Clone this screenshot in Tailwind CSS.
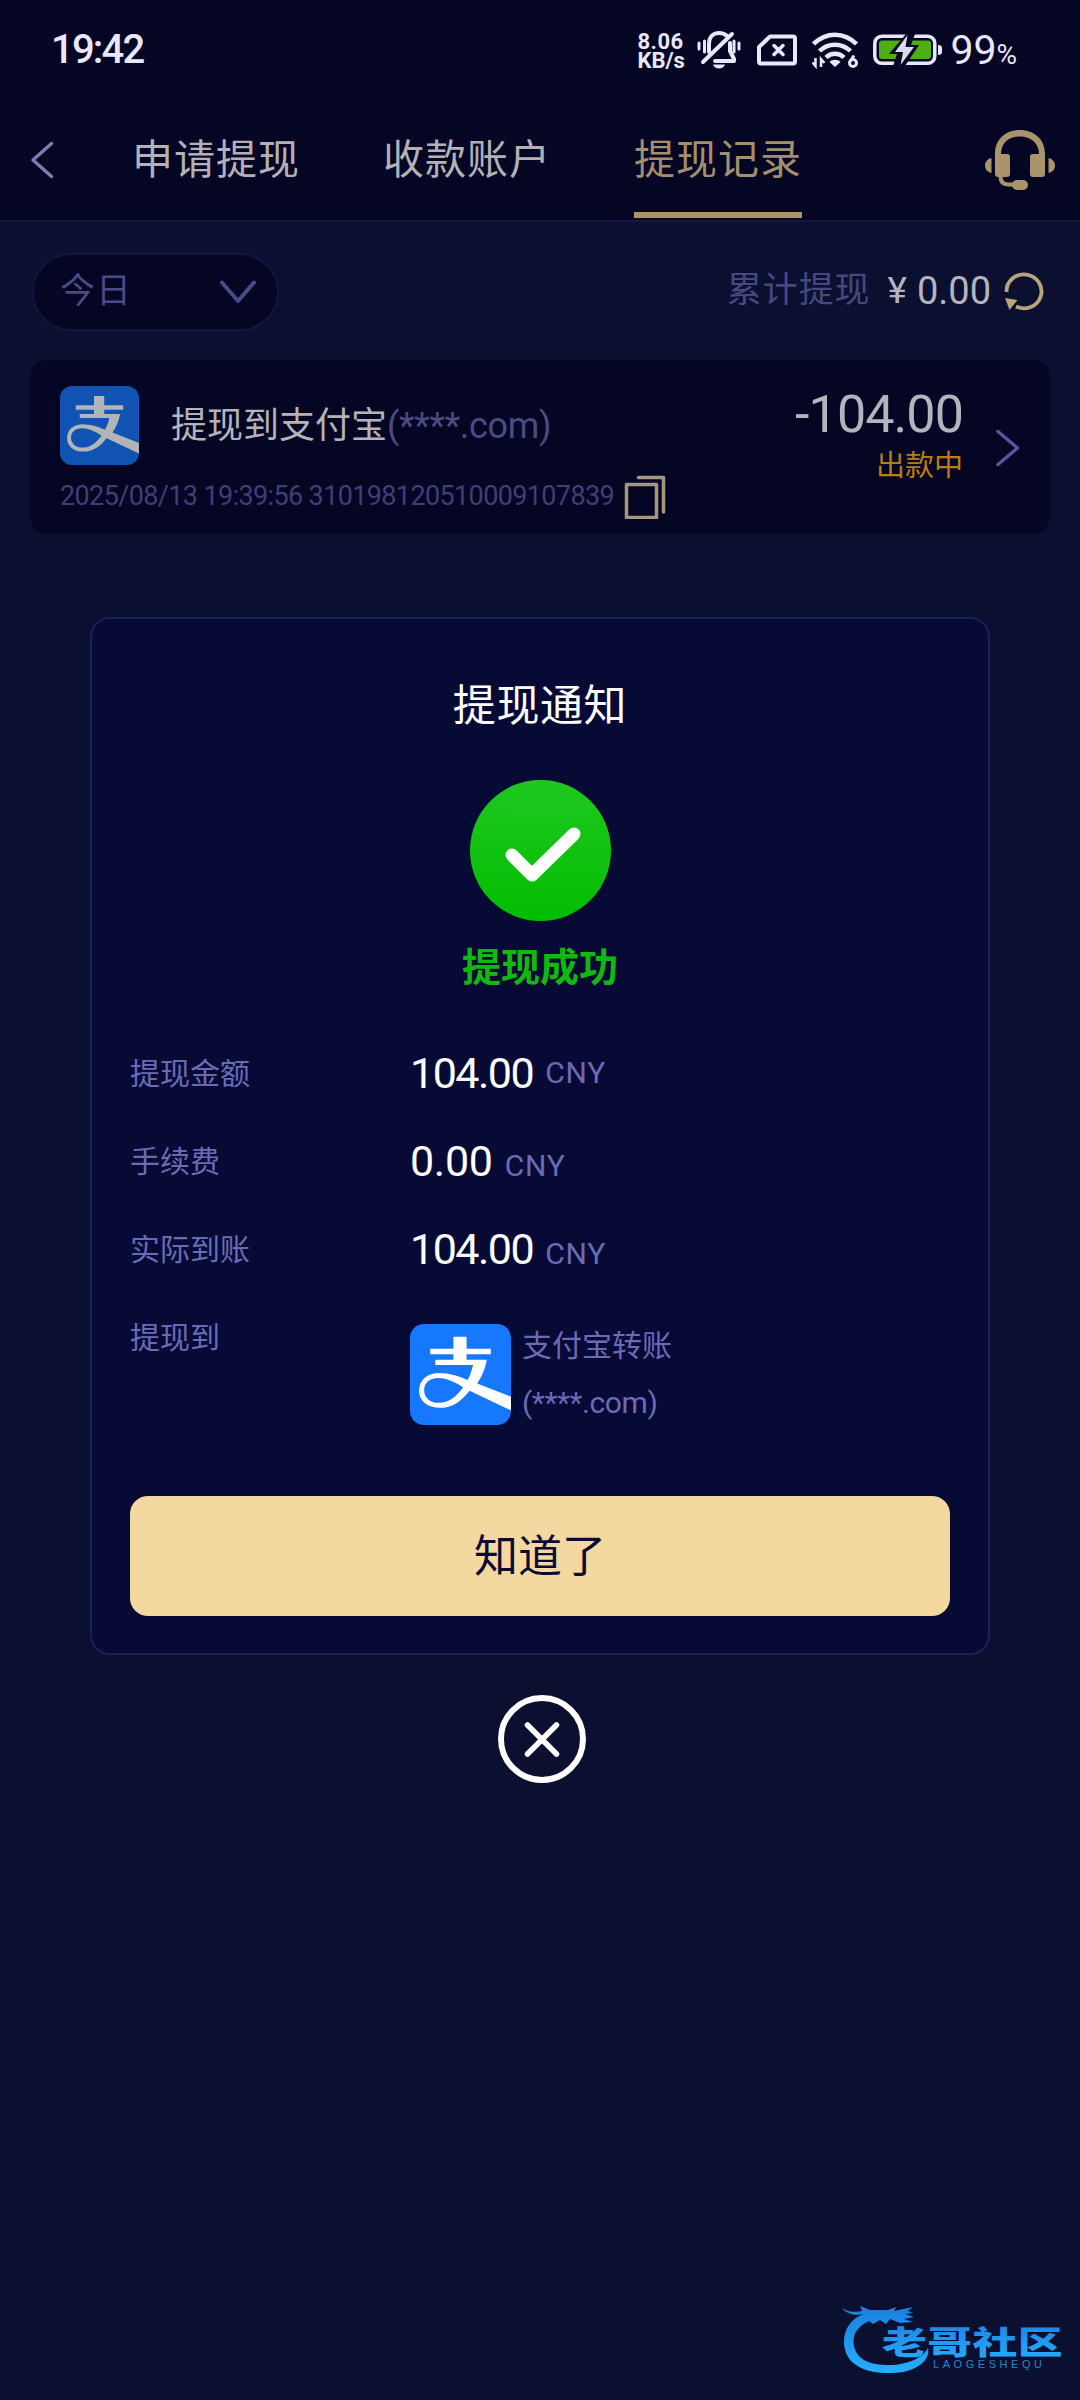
<!DOCTYPE html>
<html lang="zh-CN">
<head>
  <meta charset="UTF-8" />
  <meta name="viewport" content="width=device-width, initial-scale=1.0"/>
  <title>提现记录</title>
  <script src="https://cdn.jsdelivr.net/npm/@tailwindcss/browser@4"></script>
</head>
<body class="relative h-[2400px] w-[1080px] overflow-hidden bg-[#0b1031] font-['Roboto','Noto_Sans_CJK_SC',sans-serif]">

  <!-- Shared shapes -->
  <svg class="hidden">
    <symbol id="alipay" viewBox="0 0 100 100">
      <path d="M43 12.5H56V24.5H80V30H56V36H43V30H20V24.5H43Z"/>
      <path fill-rule="evenodd" d="M25 35.5H76C74.500 45 71 52 66.500 59L100 72V85.500L59 66C50 77.500 41 83 30 83C16.500 83 9 75.500 9 66C9 55.500 17 48.500 29 48.500C39 48.500 48 51.500 57 55.500C59.500 51 61 46 62.500 40.500H25ZM52.500 62.500C44 57.500 36 53.500 28 53.500C19 53.500 14 58.500 14 65.500C14 73 20 78 28.500 78C38 78 46 72 52.500 62.500Z"/>
    </symbol>
  </svg>

  <header class="h-[222px] border-b-2 border-[#14163f] bg-[#050524]">
    <!-- Status bar -->
    <div class="flex h-[100px] items-center justify-between pr-[63px] pl-[51px] text-[#e8e8fa]">
      <span class="text-[40px] leading-none font-medium tracking-[-1.8px]">19:42</span>
      <div class="flex items-center">
        <div class="mt-[2px] w-[60px] text-[22px] leading-[19px] font-bold">
          <p class="tracking-[0.5px]">8.06</p>
          <p>KB/s</p>
        </div>
        <svg class="mr-4 h-[40px] w-[44px]" viewBox="0 0 44 40" fill="none" stroke="currentColor" stroke-width="4" stroke-linecap="round" stroke-linejoin="round">
          <path d="M6 32L35 4M12 22V14C12 7 16 3 22 3C25 3 28 4 30 6M33 13V21L37 29V31H18"/>
          <path d="M2 13V19M7.500 11V22M37 11V22M42 13V19" stroke-width="3"/>
          <path d="M16 34.500H28C27 37 25 38.500 22 38.500S17 37 16 34.500Z" fill="currentColor" stroke="none"/>
        </svg>
        <svg class="mr-[15px] h-[32px] w-[40px]" viewBox="0 0 40 32" fill="none" stroke="currentColor" stroke-width="4" stroke-linejoin="round" stroke-linecap="round">
          <path d="M13 2.500H36Q38 2.500 38 4.500V27.500Q38 29.500 36 29.500H4Q2 29.500 2 27.500V13Z"/>
          <path d="M17 11.500L26 20.500M26 11.500L17 20.500" stroke-width="3.500"/>
        </svg>
        <svg class="mr-[14px] h-[37px] w-[47px]" viewBox="0 0 47 37" fill="none" stroke="currentColor" stroke-width="4.500">
          <path d="M1.500 12C14 -0.500 32 -0.500 44.500 12M7.500 19C16 10.500 30 10.500 38.500 19M14 25.500C19 20.500 27 20.500 32 25.500"/>
          <path d="M17.500 30C20 27 26 27 28.500 30L23 35Z" fill="currentColor" stroke="none"/>
          <path d="M3.500 26V34L0.500 30.500M9 35V27L12.500 31" stroke-width="2.500"/>
          <circle cx="41" cy="31" r="3.500" stroke-width="3"/>
          <path d="M38.500 29L42 23.500" stroke-width="3"/>
        </svg>
        <svg class="mr-2 h-[32px] w-[69px]" viewBox="0 0 69 32">
          <rect x="1.800" y="2.300" width="60" height="27" rx="7" fill="none" stroke="currentColor" stroke-width="3.500"/>
          <rect x="6" y="6.500" width="52" height="18.500" rx="3" fill="#4caf14"/>
          <path d="M33 0L16 20H24L20 32H32L46 11H38L42 0Z" fill="#050524"/>
          <path d="M34.500 1L22 18H30L27.500 31L41 13H32.500Z" fill="#dcdce8"/>
          <path d="M65 11Q69 11 69 14V18Q69 21 65 21Z" fill="currentColor"/>
        </svg>
        <span class="text-[41px] leading-none">99<span class="text-[28px]">%</span></span>
      </div>
    </div>

    <!-- Tabs -->
    <nav class="flex h-[120px] items-center pr-[25px] pl-[30px] text-[41px] tracking-[1px] text-[#b2b2b6]">
      <svg class="mr-[77px] h-10 w-6" viewBox="0 0 24 40" fill="none" stroke="#7a7cb4" stroke-width="3.500" stroke-linecap="round" stroke-linejoin="round"><path d="M21.500 3.500L3 20L21.500 36.500"/></svg>
      <div class="flex h-full flex-1 gap-[83px] pl-px leading-[120px]">
        <a>申请提现</a>
        <a>收款账户</a>
        <a class="h-[118px] border-b-6 border-[#a9946b] text-[#a38f6b]">提现记录</a>
      </div>
      <svg class="h-[60px] w-[70px]" viewBox="0 0 70 60" fill="#a9946b">
        <path d="M10 44V24C10 9 21 0 35 0S60 9 60 24V44Q60 47 57 47H48Q45 47 45 44V27Q45 24 48 24H54C54 13 46 6.500 35 6.500S16 13 16 24H22Q25 24 25 27V44Q25 47 22 47H13Q10 47 10 44Z"/>
        <path d="M6.500 28V43C2.500 42 0 39.500 0 35.500S2.500 29 6.500 28ZM63.500 28V43C67.500 42 70 39.500 70 35.500S67.500 29 63.500 28Z"/>
        <path d="M15.500 46C15.500 52 18 54.500 23 54.500H30" fill="none" stroke="#a9946b" stroke-width="4"/>
        <rect x="27" y="50" width="16" height="10" rx="5"/>
      </svg>
    </nav>
  </header>

  <main class="px-[30px] pt-[31px]">
    <div class="flex items-center justify-between pr-[6px] pl-[2px] text-[35px] text-[#4b4b84]">
      <div class="flex h-[78px] w-[247px] items-center justify-between rounded-full border-2 border-[#12163f] bg-[#050524] pr-5 pl-[26px]">
        <span class="tracking-[1px]">今日</span>
        <svg class="h-6 w-[38px]" viewBox="0 0 38 24" fill="none" stroke="currentColor" stroke-width="4" stroke-linecap="round" stroke-linejoin="round"><path d="M3 2.500L19 21L35 2.500"/></svg>
      </div>
      <div class="-mt-[2px] flex items-center">
        <span class="tracking-[0.9px] text-[#46487f]">累计提现</span>
        <span class="ml-[17px] text-[37px] text-[#b4b4bc]">¥</span>
        <span class="ml-[10px] text-[38px] text-[#b4b4bc]">0.00</span>
        <svg class="ml-[13px] h-10 w-10" viewBox="0 0 40 40">
          <path d="M2.500 21A17.500 17 0 1 1 12 35.500" fill="none" stroke="#b8a57c" stroke-width="3.800"/>
          <path d="M1 27L13.500 29L5.500 39Z" fill="#b8a57c"/>
        </svg>
      </div>
    </div>

    <!-- Record card -->
    <section class="mt-[29px] flex h-[174px] items-center rounded-[18px] bg-[#050524] pr-[29px] pl-[30px]">
      <div class="flex-1 pt-[9px]">
        <div class="flex items-center text-[36px] leading-[79px] text-[#4b4b84]">
          <svg class="mr-8 h-[79px] w-[79px] rounded-[12px] bg-[#1053b2] fill-[#b2b4b8]"><use href="#alipay"/></svg>
          <span class="pt-[3px] text-[#b4b4b8]">提现到支付宝</span><span class="pt-[3px] tracking-[-0.3px]">(****.com)</span>
        </div>
        <div class="mt-2 flex h-[45px] items-center text-[27px] text-[#3f3f74]">
          <span class="w-[564px] tracking-[-0.63px] whitespace-nowrap">2025/08/13 19:39:56 310198120510009107839</span>
          <svg class="h-11 w-[42px]" viewBox="0 0 42 44" fill="none" stroke="#a3977c" stroke-width="3.500" stroke-linejoin="round" stroke-linecap="round">
            <rect x="2.500" y="9.500" width="30" height="33"/>
            <path d="M14.500 2.500H39.500V37"/>
          </svg>
        </div>
      </div>
      <div class="mr-[32px] flex flex-col items-end">
        <span class="text-[52px] leading-[58px] tracking-[-0.9px] text-[#b4b4bc]">-104.00</span>
        <span class="mb-5 text-[29px] leading-[44px] text-[#b97d18]">出款中</span>
      </div>
      <svg class="mt-[2px] h-10 w-[26px]" viewBox="0 0 26 40" fill="none" stroke="#5557a0" stroke-width="3.500" stroke-linecap="round" stroke-linejoin="round"><path d="M3 3.500L22.500 20L3 36.500"/></svg>
    </section>
  </main>

  <!-- Withdrawal notice -->
  <div class="absolute inset-x-0 top-[617px] flex flex-col items-center">
    <div class="flex h-[1038px] w-[900px] flex-col items-center rounded-[20px] border-2 border-[#1a2156] bg-[#080a36] px-[38px]">
      <h2 class="mt-[57px] text-[43px] leading-[60px] tracking-[0.6px] text-white">提现通知</h2>
      <svg class="mt-[44px] h-[141px] w-[141px]" viewBox="0 0 141 141">
        <defs>
          <linearGradient id="ok" x1="0" y1="0" x2="0" y2="1"><stop offset="0" stop-color="#1fc81f"/><stop offset="1" stop-color="#02bd02"/></linearGradient>
        </defs>
        <circle cx="70.500" cy="70.500" r="70.500" fill="url(#ok)"/>
        <path d="M42 75L62 95L104 54" fill="none" stroke="#fff" stroke-width="13" stroke-linecap="round" stroke-linejoin="round"/>
      </svg>
      <p class="mt-[17px] text-[39px] leading-[60px] font-bold text-[#10b910]">提现成功</p>

      <dl class="mt-[32px] grid w-full auto-rows-[88px] grid-cols-[280px_1fr] text-[30px] leading-[88px] text-[#6b6bb5]">
        <dt>提现金额</dt>
        <dd class="-mt-[2px] flex items-center"><span class="text-[43px] tracking-[-1.5px] text-white">104.00</span><span class="ml-3 tracking-[0.8px]">CNY</span></dd>
        <dt>手续费</dt>
        <dd class="-mt-px flex items-baseline"><span class="text-[43px] tracking-[-0.3px] text-white">0.00</span><span class="ml-3 tracking-[0.8px]">CNY</span></dd>
        <dt>实际到账</dt>
        <dd class="-mt-px flex items-baseline"><span class="text-[43px] tracking-[-1.5px] text-white">104.00</span><span class="ml-3 tracking-[0.8px]">CNY</span></dd>
        <dt>提现到</dt>
        <dd class="flex pt-[30px]">
          <svg class="h-[101px] w-[101px] rounded-[14px] bg-[#1677ff] fill-white"><use href="#alipay"/></svg>
          <div class="ml-[11px] leading-[57px]">
            <p class="-mt-[7px]">支付宝转账</p>
            <p class="tracking-[-0.4px]">(****.com)</p>
          </div>
        </dd>
      </dl>

      <button class="mt-auto mb-[37px] h-[120px] w-[820px] rounded-[18px] bg-[#f3d8a0] pt-[2px] text-[44px] text-[#0b0a35]">知道了</button>
    </div>

    <svg class="mt-10 ml-1 h-[88px] w-[88px]" viewBox="0 0 88 88" fill="none" stroke="#fff" stroke-width="6" stroke-linecap="round">
      <circle cx="44" cy="44" r="41"/>
      <path d="M29.500 30L58.500 59M58.500 30L29.500 59" stroke-width="5.500"/>
    </svg>
  </div>

  <!-- Watermark -->
  <svg class="absolute right-[16px] bottom-[24px] h-[72px] w-[224px]" viewBox="0 0 224 72">
    <defs>
      <linearGradient id="wm" x1="0" y1="0" x2="0" y2="1"><stop offset="0" stop-color="#1c7ee0"/><stop offset="1" stop-color="#25aefc"/></linearGradient>
    </defs>
    <g fill="url(#wm)">
      <path d="M2 4C9 9 17 8 22 7L20 2L30 6H48L56 3L54 7L73 3L68 7L73 9L65 10L74 13L64 15L73 18L60 19L50 15L46 20L40 16L33 20L29 17C16 23 12 32 14 42C17 56 30 61 49 61C69 61 83 53 88 44C91 58 73 69 52 69C23 70 4 59 4 38C4 24 12 14 24 10C15 12 6 10 2 4Z"/>
      <text transform="translate(42 49.500) scale(1.400 1)" font-family="'Noto Sans CJK SC', sans-serif" font-weight="900" font-size="32" textLength="129">老哥社区</text>
    </g>
    <text x="93" y="63.500" font-family="'Liberation Sans', sans-serif" font-size="11" fill="#2288c8" textLength="109">LAOGESHEQU</text>
  </svg>
</body>
</html>
